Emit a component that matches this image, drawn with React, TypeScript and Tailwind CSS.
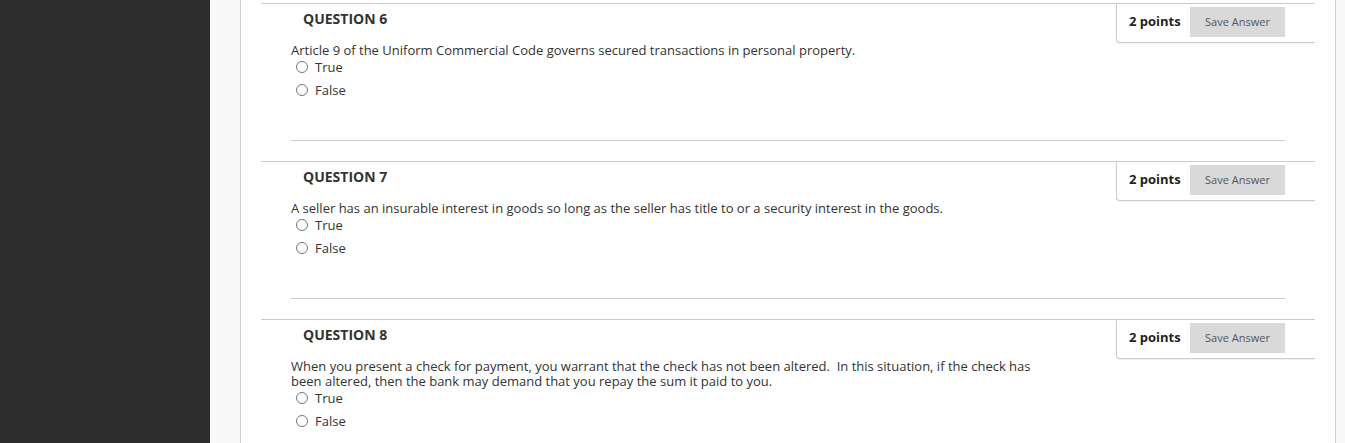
import React from "react";

const questions = [
  {
    n: 6,
    text: "Article 9 of the Uniform Commercial Code governs secured transactions in personal property.",
  },
  {
    n: 7,
    text: "A seller has an insurable interest in goods so long as the seller has title to or a security interest in the goods.",
  },
  {
    n: 8,
    text: "When you present a check for payment, you warrant that the check has not been altered.\u00a0 In this situation, if the check has been altered, then the bank may demand that you repay the sum it paid to you.",
  },
];

function Radio({ label }: { label: string }) {
  return (
    <label className="flex items-center h-[20px] ml-[5px]">
      <span className="w-[12px] h-[12px] rounded-full border border-[#767676] bg-white shrink-0" />
      <span className="ml-[7px] text-[13px] leading-[15px] text-[#333]">{label}</span>
    </label>
  );
}

export default function App() {
  return (
    <div
      className="flex w-[1345px] h-[443px] overflow-hidden bg-[#f8f8f8]"
      style={{ fontFamily: '"Open Sans", "Noto Sans", sans-serif' }}
    >
      <div className="w-[210px] shrink-0 bg-[#2d2d2d]" />
      <div className="w-[30px] shrink-0 bg-[#f8f8f8]" />
      <div className="w-[1096px] shrink-0 bg-white border-l border-r border-[#cfcfcf] pt-[3px]">
        {questions.map((q) => (
          <div key={q.n} className="mx-[20px] border-t border-[#cccccc] pb-[20px]">
            <div className="flex justify-between items-start h-[39px]">
              <h3 className="pl-[42px] pt-[5px] text-[14px] leading-[20px] font-bold text-[#333]">
                QUESTION {q.n}
              </h3>
              <div className="relative z-10 flex items-start h-[39px] w-[199px] border-l border-b border-[#cccccc] rounded-bl-[4px] bg-white shadow-[0_1px_1px_rgba(0,0,0,0.05)]">
                <span className="pl-[12px] pt-[9px] text-[13px] leading-[16px] font-bold text-[#222] w-[73px]">
                  2 points
                </span>
                <button className="mt-[3px] w-[95px] h-[30px] bg-[#d9d9d9] text-[11px] text-[#555] leading-[30px] text-center">
                  Save Answer
                </button>
              </div>
            </div>
            <div className="pl-[30px] pr-[30px]">
              <p className="max-w-[760px] text-[13px] leading-[15px] text-[#333]">{q.text}</p>
              <div className="flex flex-col gap-[3px] -mt-[1px]">
                <Radio label="True" />
                <Radio label="False" />
              </div>
              <div className="mt-[40px] border-t border-[#cccccc]" />
            </div>
          </div>
        ))}
      </div>
      <div className="flex-1 bg-[#f8f8f8]" />
    </div>
  );
}
